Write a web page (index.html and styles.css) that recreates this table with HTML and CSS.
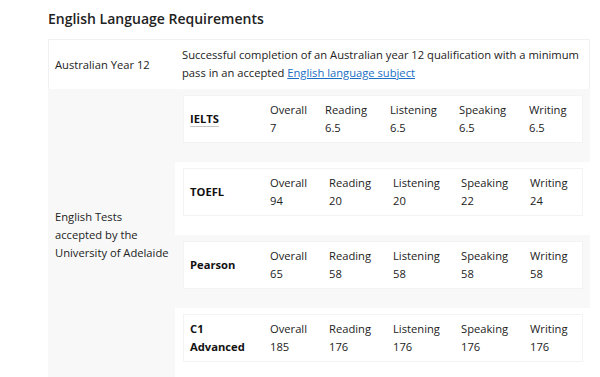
FILE: index.html
```html
<!DOCTYPE html>
<html>
<head>
<meta charset="utf-8">
<link rel="stylesheet" href="styles.css">
</head>
<body>
<h2 class="title">English Language Requirements</h2>
<div class="req">
  <div class="req-row first">
    <div class="req-label">Australian Year 12</div>
    <div class="req-desc">Successful completion of an Australian year 12 qualification with a minimum pass in an accepted <a href="#">English language subject</a></div>
  </div>
  <div class="req-row tests">
    <div class="req-label tests-label">English Tests accepted by the University of Adelaide</div>
    <div class="test-list">
      <div class="test-row">
        <div class="test-box ielts">
          <div class="test-name"><abbr class="abbr">IELTS</abbr></div>
          <div class="score"><span>Overall</span><span>7</span></div>
          <div class="score"><span>Reading</span><span>6.5</span></div>
          <div class="score"><span>Listening</span><span>6.5</span></div>
          <div class="score"><span>Speaking</span><span>6.5</span></div>
          <div class="score"><span>Writing</span><span>6.5</span></div>
        </div>
      </div>
      <div class="test-row alt">
        <div class="test-box">
          <div class="test-name">TOEFL</div>
          <div class="score"><span>Overall</span><span>94</span></div>
          <div class="score"><span>Reading</span><span>20</span></div>
          <div class="score"><span>Listening</span><span>20</span></div>
          <div class="score"><span>Speaking</span><span>22</span></div>
          <div class="score"><span>Writing</span><span>24</span></div>
        </div>
      </div>
      <div class="test-row">
        <div class="test-box">
          <div class="test-name">Pearson</div>
          <div class="score"><span>Overall</span><span>65</span></div>
          <div class="score"><span>Reading</span><span>58</span></div>
          <div class="score"><span>Listening</span><span>58</span></div>
          <div class="score"><span>Speaking</span><span>58</span></div>
          <div class="score"><span>Writing</span><span>58</span></div>
        </div>
      </div>
      <div class="test-row alt">
        <div class="test-box">
          <div class="test-name">C1<br>Advanced</div>
          <div class="score"><span>Overall</span><span>185</span></div>
          <div class="score"><span>Reading</span><span>176</span></div>
          <div class="score"><span>Listening</span><span>176</span></div>
          <div class="score"><span>Speaking</span><span>176</span></div>
          <div class="score"><span>Writing</span><span>176</span></div>
        </div>
      </div>
    </div>
  </div>
</div>
</body>
</html>
```
FILE: styles.css
```css
html, body {
  margin: 0;
  padding: 0;
  background: #fff;
}
body {
  padding: 0 10px 0 48px;
  font-family: "Open Sans", "Liberation Sans", sans-serif;
  font-size: 11.2px;
  line-height: 18px;
  color: #222;
}
.title {
  margin: 7px 0 8px;
  font-size: 14px;
  line-height: 24px;
  font-weight: 600;
  color: #222;
}
.req {
  width: 542px;
}
.req-row {
  display: grid;
  grid-template-columns: 127px 1fr;
}
.req-row.first {
  border: 1px solid #f1f1f1;
  border-bottom: none;
  height: 50px;
  box-sizing: border-box;
  background: #fff;
}
.req-label {
  padding: 0 3px 0 6px;
  display: flex;
  align-items: center;
}
.req-desc {
  padding: 6px 6px;
}
.req-desc a {
  color: #1a6fc4;
  text-decoration: underline;
}
.req-row.tests {
  background: #f8f8f8;
}
.req-row.tests .req-label {
  padding-left: 7px;
}
.test-list {
  display: flex;
  flex-direction: column;
}
.test-row {
  padding: 6px 7px 19px 8px;
}
.test-row.alt {
  background: #fff;
}
.test-box {
  background: #fff;
  border: 1px solid #f3f3f3;
  height: 48px;
  box-sizing: border-box;
  padding: 0 0 0 6px;
  display: grid;
  grid-template-columns: 80px 59px 64px 68px 69px 1fr;
  align-items: center;
}
.test-box.ielts {
  grid-template-columns: 80px 55px 65px 69px 70px 1fr;
}
.test-name {
  font-weight: 700;
  color: #111;
}
.abbr {
  text-decoration: underline;
  text-decoration-color: #c4c4c4;
  text-underline-offset: 3px;
}
.score {
  display: flex;
  flex-direction: column;
}
```
